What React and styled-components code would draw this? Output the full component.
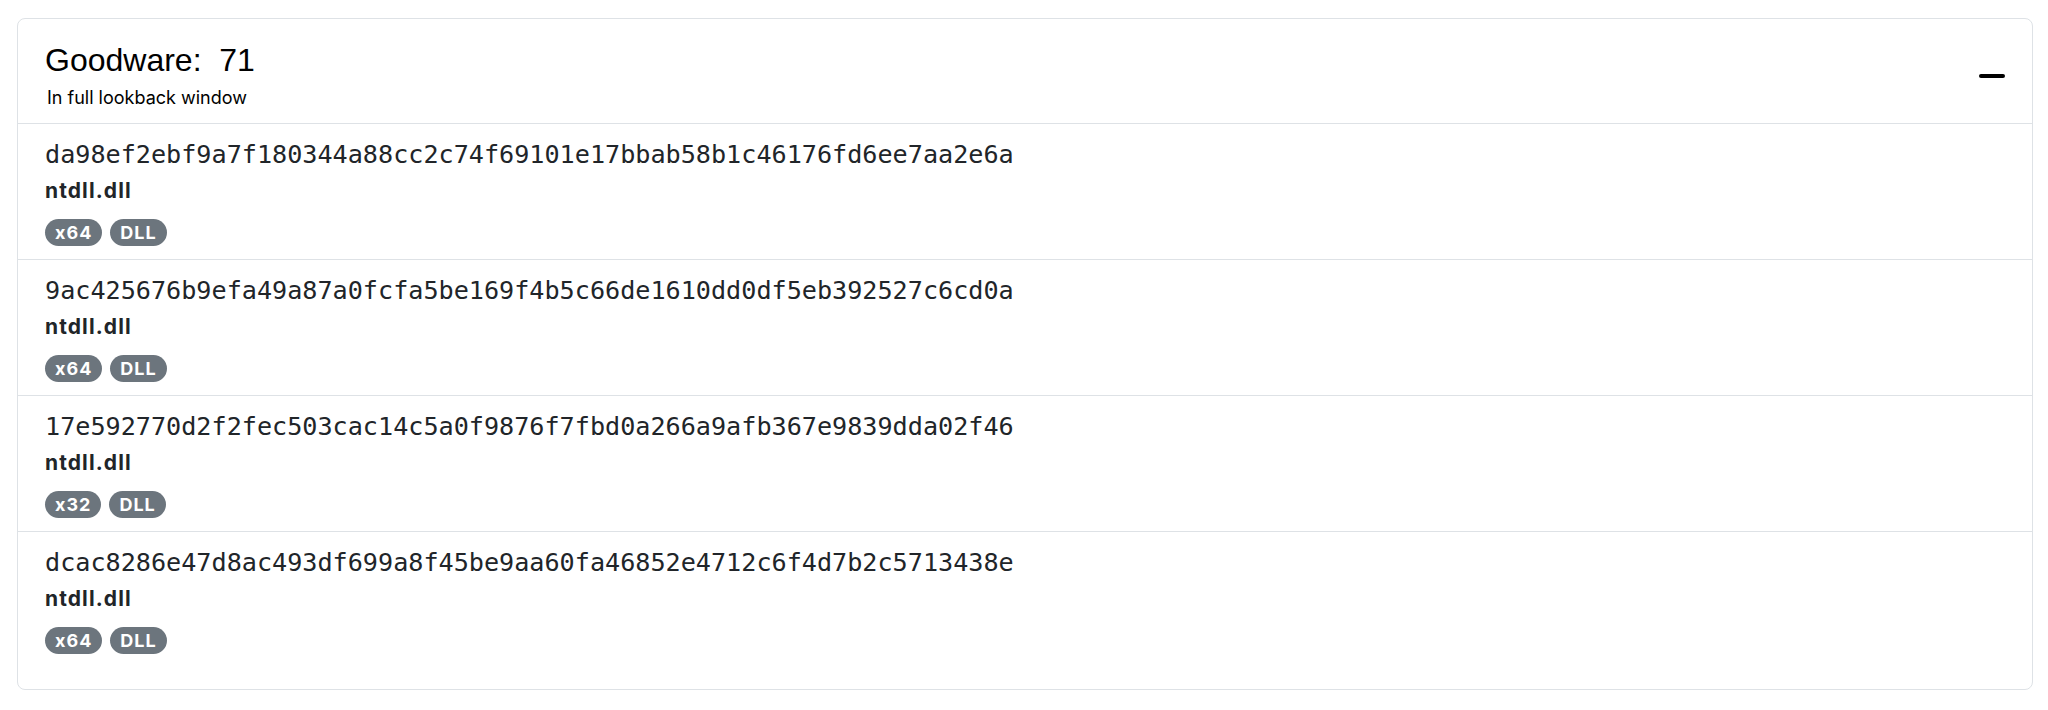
import React from 'react';
import styled, { createGlobalStyle } from 'styled-components';

const GlobalStyle = createGlobalStyle`
  body {
    margin: 0;
    padding: 18px 15px 0 17px;
    background: #fff;
    font-family: Inter, 'Liberation Sans', sans-serif;
    color: #212529;
  }
`;

const Card = styled.div`
  border: 1px solid #dee2e6;
  border-radius: 8px;
  background: #fff;
  padding-bottom: 22px;
`;

const Header = styled.div`
  display: flex;
  justify-content: space-between;
  align-items: center;
  padding: 21px 27px 13px 27px;
  border-bottom: 1px solid #dee2e6;
`;

const TitleBlock = styled.div`
  display: flex;
  flex-direction: column;
  gap: 6px;
`;

const Title = styled.div`
  font-family: 'Liberation Sans', Arial, sans-serif;
  font-size: 32px;
  line-height: 40px;
  color: #000;
  white-space: pre;
`;

const Subtitle = styled.div`
  font-family: Inter, 'Liberation Sans', sans-serif;
  font-size: 18px;
  line-height: 24px;
  margin-left: 2px;
  color: #000;
`;

const CollapseButton = styled.button`
  border: 0;
  padding: 0;
  margin-top: 2px;
  width: 26px;
  height: 4px;
  border-radius: 2px;
  background: #000;
  cursor: pointer;
`;

const Row = styled.div`
  padding: 13px 27px 13px 27px;
  border-bottom: ${p => (p.last ? 'none' : '1px solid #dee2e6')};
`;

const Hash = styled.div`
  font-family: 'DejaVu Sans Mono', 'Liberation Mono', monospace;
  font-size: 25.15px;
  line-height: 36px;
  color: #212529;
`;

const FileName = styled.div`
  font-family: Inter, 'Liberation Sans', sans-serif;
  font-weight: 700;
  font-size: 21px;
  line-height: 36px;
  letter-spacing: 1.1px;
  color: #212529;
`;

const Badges = styled.div`
  display: flex;
  gap: 8px;
  margin-top: 10px;
`;

const Badge = styled.span`
  display: inline-flex;
  align-items: center;
  justify-content: center;
  height: 27px;
  padding: 0 10px;
  border-radius: 14px;
  background: #6c757d;
  color: #fff;
  font-family: Inter, 'Liberation Sans', sans-serif;
  font-weight: 700;
  font-size: 18px;
  letter-spacing: 1px;
`;

const files = [
  { hash: 'da98ef2ebf9a7f180344a88cc2c74f69101e17bbab58b1c46176fd6ee7aa2e6a', name: 'ntdll.dll', arch: 'x64', type: 'DLL' },
  { hash: '9ac425676b9efa49a87a0fcfa5be169f4b5c66de1610dd0df5eb392527c6cd0a', name: 'ntdll.dll', arch: 'x64', type: 'DLL' },
  { hash: '17e592770d2f2fec503cac14c5a0f9876f7fbd0a266a9afb367e9839dda02f46', name: 'ntdll.dll', arch: 'x32', type: 'DLL' },
  { hash: 'dcac8286e47d8ac493df699a8f45be9aa60fa46852e4712c6f4d7b2c5713438e', name: 'ntdll.dll', arch: 'x64', type: 'DLL' },
];

const App = () => (
  <>
    <GlobalStyle />
    <Card>
      <Header>
        <TitleBlock>
          <Title>Goodware:  71</Title>
          <Subtitle>In full lookback window</Subtitle>
        </TitleBlock>
        <CollapseButton aria-label="collapse" />
      </Header>
      {files.map((f, i) => (
        <Row key={f.hash} last={i === files.length - 1}>
          <Hash>{f.hash}</Hash>
          <FileName>{f.name}</FileName>
          <Badges>
            <Badge>{f.arch}</Badge>
            <Badge>{f.type}</Badge>
          </Badges>
        </Row>
      ))}
    </Card>
  </>
);

export default App;
